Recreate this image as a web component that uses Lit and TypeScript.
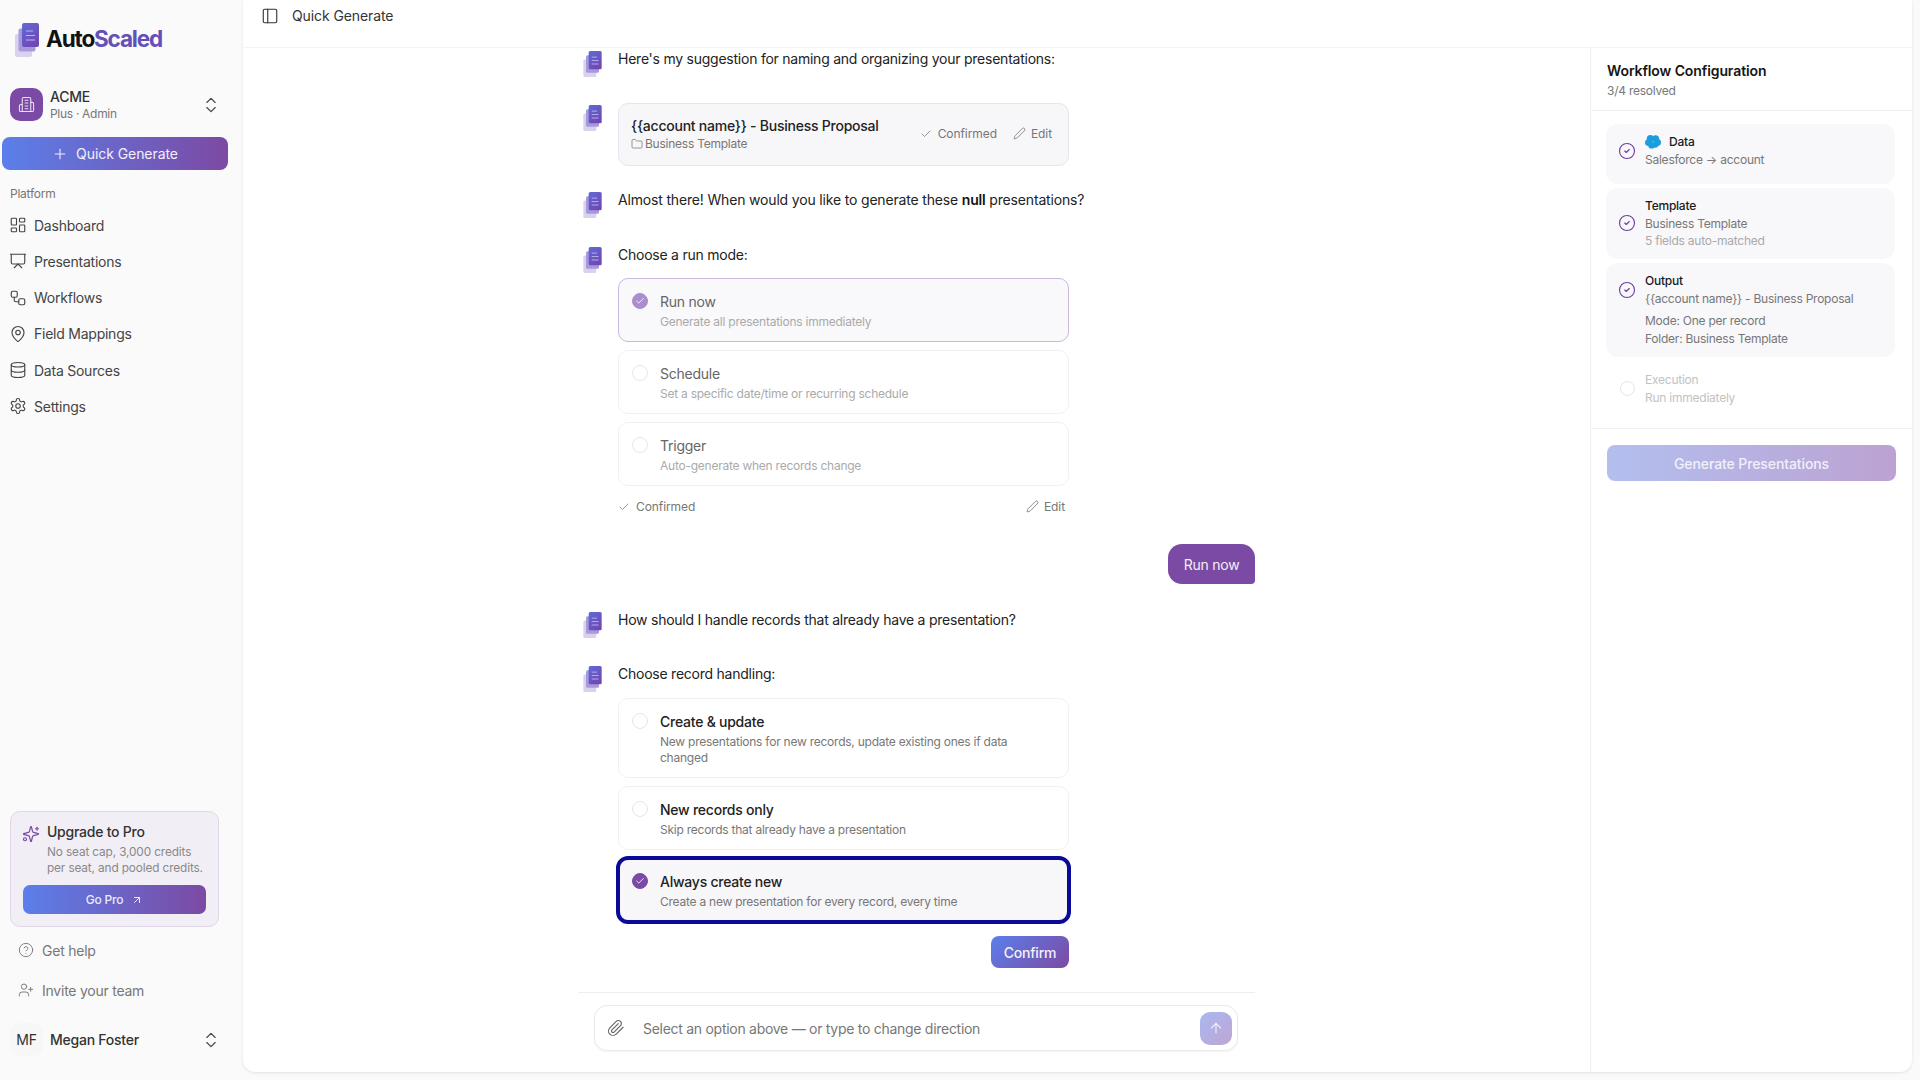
import { LitElement, html, css, svg, nothing } from "lit";
import { customElement } from "lit/decorators.js";

const I: Record<string, any> = {
  dash: svg`<rect width="7" height="9" x="3" y="3" rx="1"/><rect width="7" height="5" x="14" y="3" rx="1"/><rect width="7" height="9" x="14" y="12" rx="1"/><rect width="7" height="5" x="3" y="16" rx="1"/>`,
  pres: svg`<path d="M2 3h20"/><path d="M21 3v11a2 2 0 0 1-2 2H5a2 2 0 0 1-2-2V3"/><path d="m7 21 5-5 5 5"/>`,
  flow: svg`<rect width="8" height="8" x="3" y="3" rx="2"/><path d="M7 11v4a2 2 0 0 0 2 2h4"/><rect width="8" height="8" x="13" y="13" rx="2"/>`,
  pin: svg`<path d="M20 10c0 4.993-5.539 10.193-7.399 11.799a1 1 0 0 1-1.202 0C9.539 20.193 4 14.993 4 10a8 8 0 0 1 16 0"/><circle cx="12" cy="10" r="3"/>`,
  db: svg`<ellipse cx="12" cy="5" rx="9" ry="3"/><path d="M3 5V19A9 3 0 0 0 21 19V5"/><path d="M3 12A9 3 0 0 0 21 12"/>`,
  gear: svg`<path d="M12.22 2h-.44a2 2 0 0 0-2 2v.18a2 2 0 0 1-1 1.73l-.43.25a2 2 0 0 1-2 0l-.15-.08a2 2 0 0 0-2.73.73l-.22.38a2 2 0 0 0 .73 2.73l.15.1a2 2 0 0 1 1 1.72v.51a2 2 0 0 1-1 1.74l-.15.09a2 2 0 0 0-.73 2.73l.22.38a2 2 0 0 0 2.73.73l.15-.08a2 2 0 0 1 2 0l.43.25a2 2 0 0 1 1 1.73V20a2 2 0 0 0 2 2h.44a2 2 0 0 0 2-2v-.18a2 2 0 0 1 1-1.73l.43-.25a2 2 0 0 1 2 0l.15.08a2 2 0 0 0 2.73-.73l.22-.39a2 2 0 0 0-.73-2.73l-.15-.08a2 2 0 0 1-1-1.74v-.5a2 2 0 0 1 1-1.74l.15-.09a2 2 0 0 0 .73-2.73l-.22-.38a2 2 0 0 0-2.73-.73l-.15.08a2 2 0 0 1-2 0l-.43-.25a2 2 0 0 1-1-1.73V4a2 2 0 0 0-2-2z"/><circle cx="12" cy="12" r="3"/>`,
  building: svg`<path d="M6 22V4a2 2 0 0 1 2-2h8a2 2 0 0 1 2 2v18Z"/><path d="M6 12H4a2 2 0 0 0-2 2v6a2 2 0 0 0 2 2h2"/><path d="M18 9h2a2 2 0 0 1 2 2v9a2 2 0 0 1-2 2h-2"/><path d="M10 6h4"/><path d="M10 10h4"/><path d="M10 14h4"/><path d="M10 18h4"/>`,
  chev: svg`<path d="m7 15 5 5 5-5"/><path d="m7 9 5-5 5 5"/>`,
  panel: svg`<rect width="18" height="18" x="3" y="3" rx="2"/><path d="M9 3v18"/>`,
  spark: svg`<path d="M9.937 15.5A2 2 0 0 0 8.5 14.063l-6.135-1.582a.5.5 0 0 1 0-.962L8.5 9.936A2 2 0 0 0 9.937 8.5l1.582-6.135a.5.5 0 0 1 .963 0L14.063 8.5A2 2 0 0 0 15.5 9.937l6.135 1.581a.5.5 0 0 1 0 .964L15.5 14.063a2 2 0 0 0-1.437 1.437l-1.582 6.135a.5.5 0 0 1-.963 0z"/><path d="M20 3v4"/><path d="M22 5h-4"/><circle cx="4" cy="19" r="2"/>`,
  help: svg`<circle cx="12" cy="12" r="10"/><path d="M9.09 9a3 3 0 0 1 5.83 1c0 2-3 3-3 3"/><path d="M12 17h.01"/>`,
  invite: svg`<path d="M16 21v-2a4 4 0 0 0-4-4H6a4 4 0 0 0-4 4v2"/><circle cx="9" cy="7" r="4"/><path d="M19 8v6"/><path d="M22 11h-6"/>`,
  upright: svg`<path d="M7 7h10v10"/><path d="M7 17 17 7"/>`,
  check: svg`<path d="M20 6 9 17l-5-5"/>`,
  pencil: svg`<path d="M21.174 6.812a1 1 0 0 0-3.986-3.987L3.842 16.174a2 2 0 0 0-.5.83l-1.321 4.352a.5.5 0 0 0 .623.622l4.353-1.32a2 2 0 0 0 .83-.497z"/>`,
  folder: svg`<path d="M20 20a2 2 0 0 0 2-2V8a2 2 0 0 0-2-2h-7.9a2 2 0 0 1-1.69-.9L9.6 3.9A2 2 0 0 0 7.93 3H4a2 2 0 0 0-2 2v13a2 2 0 0 0 2 2Z"/>`,
  clip: svg`<path d="m21.44 11.05-9.19 9.19a6 6 0 0 1-8.49-8.49l8.57-8.57A4 4 0 1 1 18 8.84l-8.59 8.57a2 2 0 0 1-2.83-2.83l8.49-8.48"/>`,
  circleCheck: svg`<circle cx="12" cy="12" r="10"/><path d="m9 12 2 2 4-4"/>`,
  up: svg`<path d="m5 12 7-7 7 7"/><path d="M12 19V5"/>`,
  plus: svg`<path d="M5 12h14"/><path d="M12 5v14"/>`,
};

const ic = (name: string, cls = "") =>
  html`<svg class="ic ${cls}" viewBox="0 0 24 24" fill="none" stroke="currentColor" stroke-width="2" stroke-linecap="round" stroke-linejoin="round">${I[name]}</svg>`;

const docLogo = (cls: string) => html`<svg class=${cls} viewBox="0 0 24 34">
  <defs><linearGradient id="dg" x1="0" y1="0" x2="0.6" y2="1"><stop offset="0" stop-color="#5f6bd8"/><stop offset="1" stop-color="#7048b4"/></linearGradient></defs>
  <rect x="0" y="11" width="17" height="23" rx="2" fill="#d9d2ee"/>
  <rect x="3.5" y="5.5" width="17" height="23" rx="2" fill="#a899dc"/>
  <rect x="7" y="0" width="17" height="24" rx="2" fill="url(#dg)"/>
  <path d="M11 8h7M11 12.5h9M11 17h9" stroke="#b9b3ee" stroke-width="1.2" fill="none"/>
</svg>`;

const NAV: [string, string][] = [
  ["dash", "Dashboard"], ["pres", "Presentations"], ["flow", "Workflows"],
  ["pin", "Field Mappings"], ["db", "Data Sources"], ["gear", "Settings"],
];

@customElement("app-root")
export class AppRoot extends LitElement {
  static styles = css`
    :host { display: flex; width: 1920px; height: 1080px; overflow: hidden; background: #fafafa;
      font-family: Inter, "Liberation Sans", sans-serif; font-size: 14px; color: #1b1b1f; letter-spacing: -0.24px; }
    * { box-sizing: border-box; }
    .ic { width: 14px; height: 14px; flex: none; display: block; }

    .side { width: 243px; flex: none; display: flex; flex-direction: column; color: #444; }
    .brand { display: flex; align-items: center; height: 34px; margin: 23px 0 0 15px; gap: 7px; }
    .brand-mark { width: 24px; height: 34px; flex: none; }
    .brand-text { font-size: 22.5px; font-weight: 700; letter-spacing: -1.15px; color: #111; margin-top: -3px; }
    .brand-text span { color: #6350b8; }
    .org { display: flex; align-items: center; margin: 31px 0 0 10px; width: 211px; height: 33px; }
    .org-badge { width: 33px; height: 33px; border-radius: 10px; background: #7a4aa4; color: #e9e0f2; display: flex; align-items: center; justify-content: center; flex: none; }
    .org-badge .ic { width: 17px; height: 17px; stroke-width: 1.5; }
    .org-txt { margin-left: 7px; flex: 1; padding-top: 2px; }
    .org-name { font-size: 14px; font-weight: 500; line-height: 17px; color: #333; }
    .org-sub { font-size: 12px; line-height: 18px; color: #777; letter-spacing: -0.3px; }
    .chev { color: #444; width: 20px; height: 20px; stroke-width: 1.4; }
    .qg { margin: 16px 0 0 2px; width: 226px; height: 33px; border-radius: 8px; background: linear-gradient(90deg, #5b7fea, #7c4aa3);
      color: #f2f0fb; display: flex; align-items: center; justify-content: center; gap: 8px; font-size: 14px; letter-spacing: -0.06px; }
    .qg .ic { width: 16px; height: 16px; stroke-width: 1.6; }
    .plat { margin: 16px 0 0 10px; font-size: 12px; line-height: 16px; color: #777; }
    .nav { margin-top: 5px; display: flex; flex-direction: column; }
    .nav-item { height: 36.25px; display: flex; align-items: center; padding-left: 9px; gap: 7px; font-size: 14px; color: #444; }
    .nav-item .ic { width: 18px; height: 18px; stroke-width: 1.5; }
    .spacer { flex: 1; }
    .up { margin-left: 10px; width: 209px; height: 116px; border: 1px solid #e0d6ea; border-radius: 10px; background: #f1eef5; padding: 10px 12px 0 12px; }
    .up-top { display: flex; gap: 6px; }
    .up-top .ic { width: 18px; height: 18px; color: #7a4aa4; margin-top: 3px; margin-left: -1px; margin-right: 1px; stroke-width: 1.6; }
    .up-title { font-size: 14px; font-weight: 500; line-height: 20px; color: #333; }
    .up-desc { font-size: 11.8px; line-height: 16px; color: #888; white-space: nowrap; margin-top: 2px; letter-spacing: -0.12px; }
    .up-btn { margin-top: 9px; height: 29px; border-radius: 7px; background: linear-gradient(90deg, #5b7fea, #7c4aa3); color: #ecebf8;
      display: flex; align-items: center; justify-content: center; gap: 8px; font-size: 12px; font-weight: 500; }
    .up-btn .ic { width: 12px; height: 12px; }
    .link { display: flex; align-items: center; gap: 7px; padding-left: 17px; height: 40px; color: #777; font-size: 14px; }
    .link .ic { width: 18px; height: 18px; stroke-width: 1.4; padding: 1px; }
    .links { margin-top: 3px; }
    .user { display: flex; align-items: center; margin: 13px 0 24px 10px; width: 211px; height: 33px; }
    .avatar { width: 33px; height: 33px; border-radius: 10px; background: #f7f7f7; display: flex; align-items: center; justify-content: center; font-size: 14px; color: #333; flex: none; }
    .user-name { flex: 1; margin-left: 7px; font-weight: 500; color: #333; font-size: 14px; }

    .main { flex: 1; margin: 0 8px 8px 0; background: #fff; border-bottom-left-radius: 12px; border-bottom-right-radius: 12px;
      box-shadow: 0 1px 3px rgba(0,0,0,.1); display: flex; flex-direction: column; min-width: 0; }
    .head { height: 48px; flex: none; border-bottom: 1px solid #f3f3f3; display: flex; align-items: flex-start; gap: 13px; padding: 7px 0 0 18px; color: #333; line-height: 18px; letter-spacing: -0.1px; }
    .head .ic { width: 18px; height: 18px; stroke-width: 1.5; }
    .body { flex: 1; display: flex; min-height: 0; }
    .chat { flex: 1; display: flex; flex-direction: column; align-items: center; min-width: 0; }
    .col { width: 677px; flex: 1; display: flex; flex-direction: column; min-height: 0; }
    .msgs { flex: 1; padding: 1px 0 0 0; }
    .row { position: relative; padding-left: 40px; }
    .mark { position: absolute; left: 4.5px; top: 2px; width: 19px; height: 26px; }
    .t { line-height: 20px; color: #222; font-size: 14px; }
    .t.wide { letter-spacing: -0.17px; }
    .t b { font-weight: 600; color: #111; }
    .card { width: 451px; height: 63px; border: 1px solid #e8e4ee; border-radius: 10px; background: #f7f6f9; display: flex; align-items: center; padding: 0 16px 1px 12px; }
    .card-l { flex: 1; }
    .card-title { font-size: 14px; font-weight: 500; line-height: 18px; color: #222; margin-bottom: 1px; }
    .card-sub { font-size: 12px; line-height: 16px; color: #777; display: flex; align-items: center; gap: 2px; }
    .card-sub .ic { width: 12px; height: 12px; stroke-width: 1.5; }
    .meta { display: flex; align-items: center; gap: 6px; font-size: 12px; color: #777; margin-bottom: 1px; letter-spacing: -0.08px; }
    .meta .ic { width: 12px; height: 12px; stroke-width: 1.5; }
    .meta .ic.pen { width: 13px; height: 13px; margin-right: -1px; }
    .conf { margin-right: 10px; }
    .opts { display: flex; flex-direction: column; gap: 8px; width: 451px; }
    .opt { width: 451px; height: 64px; border: 1px solid #f1f1f3; border-radius: 10px; display: flex; padding: 13px 12px 0 13px; gap: 12px; background: #fff; }
    .opt.tall { height: 80px; }
    .radio { width: 16px; height: 16px; border-radius: 50%; border: 1px solid #e6e6e8; flex: none; margin-top: 1px; display: flex; align-items: center; justify-content: center; color: #fff; }
    .radio .ic { width: 10px; height: 10px; stroke-width: 2; }
    .radio.on { background: #7a4aa4; border-color: #7a4aa4; }
    .opt-title { font-size: 14px; font-weight: 500; line-height: 20px; color: #222; }
    .opt-desc { font-size: 12px; line-height: 16px; color: #777; margin-top: 2px; }
    .faded .opt-title { color: #666; font-weight: 400; }
    .faded .opt-desc { color: #aaa; }
    .faded .radio.on { background: #ab8dce; border-color: #ab8dce; }
    .opt.sel { border-color: #c9b9de; background: #f9f8fb; }
    .opt.focus { background: #f7f6f9; border: 1px solid #f0eef3; outline: 4px solid #0a0a96; outline-offset: -2px; }
    .conf-row { width: 451px; display: flex; justify-content: space-between; align-items: center; height: 16px; margin-top: 13px; padding: 0 4px 0 0; font-size: 12px; color: #777; }
    .bubble-wrap { display: flex; justify-content: flex-end; margin-top: 29px; }
    .bubble { height: 40px; width: 87px; border-radius: 14px 14px 4px 14px; background: #7a4aa4; color: #f3eef7; display: flex; align-items: center; justify-content: center; font-size: 14px; }
    .confirm-row { width: 451px; display: flex; justify-content: flex-end; margin-top: 14px; }
    .confirm { width: 78px; height: 32px; border-radius: 8px; background: linear-gradient(135deg, #5b7fea, #7c4aa3); color: #f2f0fb; display: flex; align-items: center; justify-content: center; font-size: 14px; font-weight: 500; }
    .input-wrap { flex: none; border-top: 1px solid #eeeeee; height: 80px; padding: 12px 17px 0 16px; }
    .input { height: 46px; border: 1px solid #e9e9ec; border-radius: 13px; box-shadow: 0 1px 2px rgba(0,0,0,.06); display: flex; align-items: center; padding: 0 5px 0 12px; color: #777; font-size: 14px; }
    .input .clip { width: 18px; height: 18px; color: #666; stroke-width: 1.6; margin-right: 18px; }
    .input .ph { flex: 1; letter-spacing: -0.28px; }
    .send { width: 32px; height: 33px; border-radius: 10px; background: linear-gradient(135deg, #a9b8ee, #bfa5d6); color: #eef; display: flex; align-items: center; justify-content: center; }
    .send .ic { width: 16px; height: 16px; stroke-width: 1.7; }

    .panel { width: 322px; flex: none; border-left: 1px solid #f1f1f1; display: flex; flex-direction: column; }
    .p-head { height: 63px; flex: none; border-bottom: 1px solid #f1f1f1; padding: 13px 16px 0; }
    .p-title { font-size: 14px; font-weight: 600; line-height: 20px; color: #151515; letter-spacing: -0.1px; }
    .p-sub { font-size: 12px; line-height: 16px; color: #777; margin-top: 2px; }
    .steps { padding: 13px 17px 0 15px; display: flex; flex-direction: column; gap: 4px; height: 318px; border-bottom: 1px solid #f1f1f1; flex: none; }
    .step { background: #f8f7fa; border-radius: 12px; display: flex; gap: 9px; padding: 9px 12px 0 12px; }
    .s1 { height: 60px; } .s2 { height: 71px; } .s3 { height: 94px; } .s4 { height: 62px; background: transparent; padding-top: 10px; }
    .step .ic { width: 18px; height: 18px; color: #6e3fa0; stroke-width: 1.5; padding: 0; }
    .s1 .ic, .s3 .ic { margin-top: 9px; }
    .s2 .ic { margin-top: 17px; }
    .step .empty { width: 15px; height: 15px; margin: 10px 1px 0 2px; border-radius: 50%; border: 1.5px solid #e4e4e6; flex: none; }
    .s-name { font-size: 12px; font-weight: 500; line-height: 18px; color: #1a1a1a; display: flex; align-items: center; gap: 8px; }
    .s-name svg { width: 16px; height: 16px; flex: none; margin-bottom: 1px; }
    .s-line { font-size: 12px; line-height: 18px; color: #777; white-space: nowrap; }
    .s-line.light { color: #aaa; line-height: 16px; }
    .s-gap { margin-top: 4px; }
    .s4 .s-name, .s4 .s-line { color: #c2c2c2; font-weight: 400; }
    .gen-wrap { padding: 16px; }
    .gen { height: 36px; border-radius: 8px; background: linear-gradient(90deg, #b3bfef, #bca2d2); color: #f1f0fa; display: flex; align-items: center; justify-content: center; font-size: 14px; font-weight: 500; letter-spacing: -0.1px; }
  `;

  private msg(top: number, content: unknown) {
    return html`<div class="row" style="margin-top:${top}px">${docLogo("mark")}${content}</div>`;
  }

  private opt(title: string, desc: string, cls = "", on = false) {
    return html`<div class="opt ${cls}"><div class="radio ${on ? "on" : ""}">${on ? ic("check") : nothing}</div>
      <div><div class="opt-title">${title}</div><div class="opt-desc">${desc}</div></div></div>`;
  }

  render() {
    return html`
      <aside class="side">
        <div class="brand">${docLogo("brand-mark")}<div class="brand-text">Auto<span>Scaled</span></div></div>
        <div class="org">
          <div class="org-badge">${ic("building")}</div>
          <div class="org-txt"><div class="org-name">ACME</div><div class="org-sub">Plus · Admin</div></div>
          ${ic("chev", "chev")}
        </div>
        <div class="qg">${ic("plus")}Quick Generate</div>
        <div class="plat">Platform</div>
        <nav class="nav">${NAV.map(([i, l]) => html`<div class="nav-item">${ic(i)}${l}</div>`)}</nav>
        <div class="spacer"></div>
        <div class="up">
          <div class="up-top">${ic("spark")}<div>
            <div class="up-title">Upgrade to Pro</div>
            <div class="up-desc">No seat cap, 3,000 credits<br />per seat, and pooled credits.</div>
          </div></div>
          <div class="up-btn">Go Pro ${ic("upright")}</div>
        </div>
        <div class="links">
          <div class="link">${ic("help")}Get help</div>
          <div class="link">${ic("invite")}Invite your team</div>
        </div>
        <div class="user"><div class="avatar">MF</div><div class="user-name">Megan Foster</div>${ic("chev", "chev")}</div>
      </aside>
      <main class="main">
        <header class="head">${ic("panel")}<span>Quick Generate</span></header>
        <div class="body">
          <section class="chat"><div class="col">
            <div class="msgs">
              ${this.msg(0, html`<div class="t">Here's my suggestion for naming and organizing your presentations:</div>`)}
              ${this.msg(34, html`<div class="card"><div class="card-l"><div class="card-title">{{account name}} - Business Proposal</div>
                <div class="card-sub">${ic("folder")}Business Template</div></div>
                <div class="meta">${ic("check")}<span class="conf">Confirmed</span>${ic("pencil", "pen")}<span>Edit</span></div></div>`)}
              ${this.msg(24, html`<div class="t wide">Almost there! When would you like to generate these <b>null</b> presentations?</div>`)}
              ${this.msg(35, html`<div class="t">Choose a run mode:</div>`)}
              <div class="row" style="margin-top:13px"><div class="opts faded">
                ${this.opt("Run now", "Generate all presentations immediately", "sel", true)}
                ${this.opt("Schedule", "Set a specific date/time or recurring schedule")}
                ${this.opt("Trigger", "Auto-generate when records change")}
              </div>
              <div class="conf-row"><span class="meta">${ic("check")}Confirmed</span><span class="meta">${ic("pencil", "pen")}Edit</span></div>
              </div>
              <div class="bubble-wrap"><div class="bubble">Run now</div></div>
              ${this.msg(26, html`<div class="t">How should I handle records that already have a presentation?</div>`)}
              ${this.msg(34, html`<div class="t">Choose record handling:</div>`)}
              <div class="row" style="margin-top:14px"><div class="opts">
                ${this.opt("Create & update", "New presentations for new records, update existing ones if data changed", "tall")}
                ${this.opt("New records only", "Skip records that already have a presentation")}
                ${this.opt("Always create new", "Create a new presentation for every record, every time", "focus", true)}
              </div>
              <div class="confirm-row"><div class="confirm">Confirm</div></div></div>
            </div>
            <div class="input-wrap"><div class="input">${ic("clip", "clip")}<span class="ph">Select an option above — or type to change direction</span><div class="send">${ic("up")}</div></div></div>
          </div></section>
          <aside class="panel">
            <div class="p-head"><div class="p-title">Workflow Configuration</div><div class="p-sub">3/4 resolved</div></div>
            <div class="steps">
              <div class="step s1">${ic("circleCheck")}<div>
                <div class="s-name"><svg viewBox="0 0 16 16"><g fill="#1b9fdc"><circle cx="5.4" cy="4.6" r="3.6"/><circle cx="10.6" cy="4.8" r="3.5"/><circle cx="3.4" cy="8.6" r="3.4"/><circle cx="12.6" cy="8.4" r="3.4"/><circle cx="6.6" cy="11.2" r="3.4"/><circle cx="10.4" cy="10.8" r="2.9"/></g></svg>Data</div>
                <div class="s-line">Salesforce → account</div></div></div>
              <div class="step s2">${ic("circleCheck")}<div>
                <div class="s-name">Template</div><div class="s-line">Business Template</div><div class="s-line light">5 fields auto-matched</div></div></div>
              <div class="step s3">${ic("circleCheck")}<div>
                <div class="s-name">Output</div><div class="s-line">{{account name}} - Business Proposal</div>
                <div class="s-line s-gap">Mode: One per record</div><div class="s-line">Folder: Business Template</div></div></div>
              <div class="step s4"><div class="empty"></div><div>
                <div class="s-name">Execution</div><div class="s-line">Run immediately</div></div></div>
            </div>
            <div class="gen-wrap"><div class="gen">Generate Presentations</div></div>
          </aside>
        </div>
      </main>`;
  }
}
